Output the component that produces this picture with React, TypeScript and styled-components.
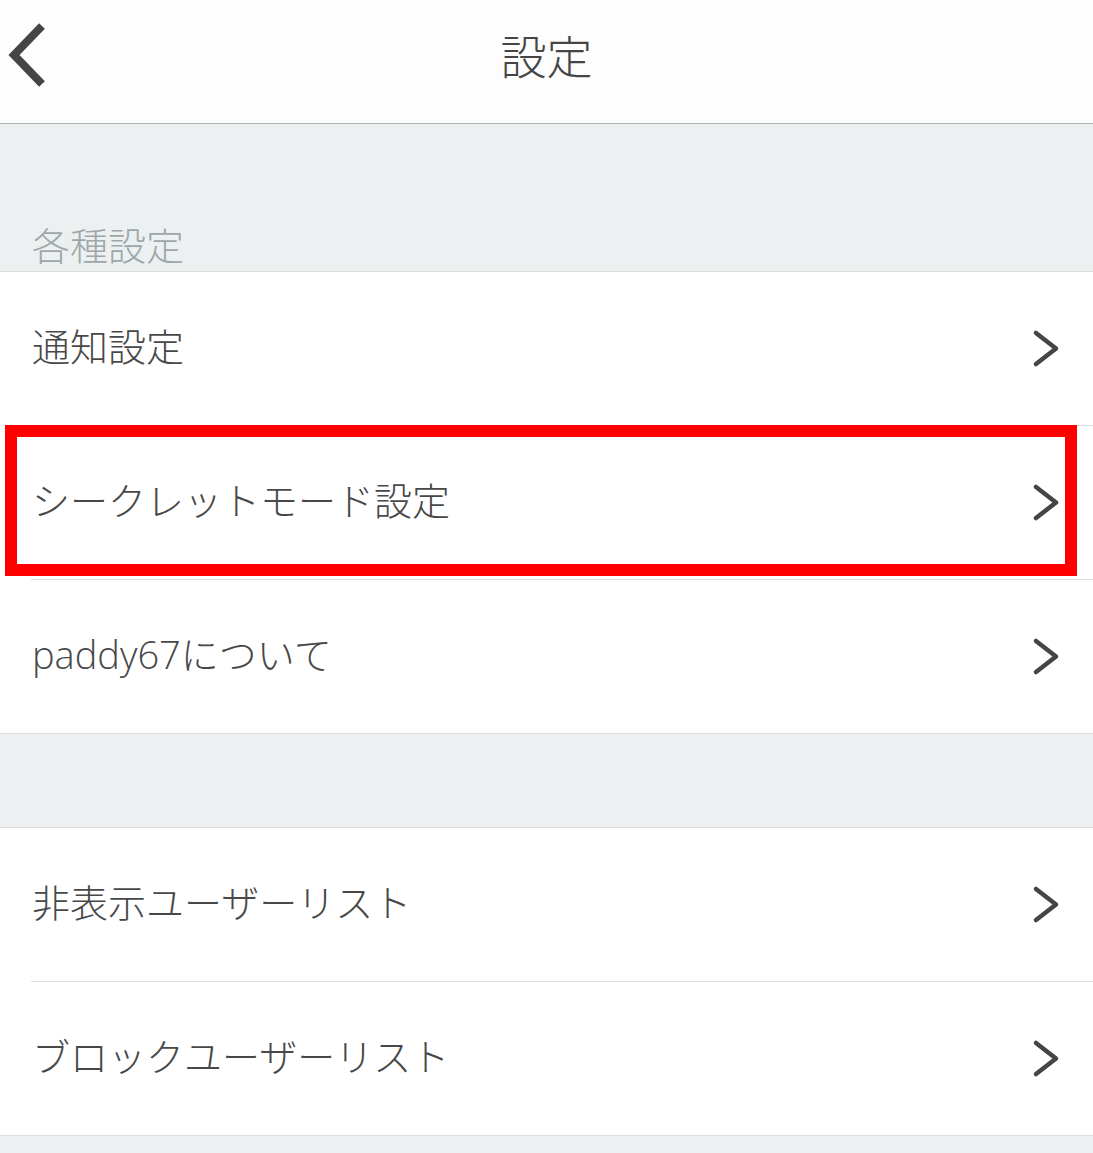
import React from 'react';
import styled, { createGlobalStyle } from 'styled-components';

const GlobalStyle = createGlobalStyle`
  html, body {
    margin: 0;
    padding: 0;
    background: #ecf0f1;
    font-family: "Open Sans", "Noto Sans CJK JP", sans-serif;
  }
`;

interface IRow {
  label: string;
  highlighted?: boolean;
}

const groups: IRow[][] = [
  [
    { label: '通知設定' },
    { label: 'シークレットモード設定', highlighted: true },
    { label: 'paddy67について' },
  ],
  [{ label: '非表示ユーザーリスト' }, { label: 'ブロックユーザーリスト' }],
];

const BackIcon = () => (
  <svg width='44' height='66' viewBox='0 0 44 66'>
    <path
      d='M38 4 L10 33 L38 62'
      fill='none'
      stroke='#454545'
      strokeWidth='8'
      strokeLinejoin='miter'
    />
  </svg>
);

const ChevronIcon = () => (
  <svg width='29' height='39' viewBox='0 0 29 39'>
    <path
      d='M4 4 L24 19.5 L4 35'
      fill='none'
      stroke='#454545'
      strokeWidth='4.5'
      strokeLinecap='round'
      strokeLinejoin='round'
    />
  </svg>
);

const App = (): JSX.Element => {
  return (
    <Page>
      <GlobalStyle />
      <Header>
        <BackButton>
          <BackIcon />
        </BackButton>
        <Title>設定</Title>
      </Header>
      <SectionHead>
        <SectionLabel>各種設定</SectionLabel>
      </SectionHead>
      {groups.map((rows, gi) => (
        <React.Fragment key={gi}>
          {gi > 0 && <Spacer />}
          <Group>
            {rows.map((row, ri) => (
              <Row key={row.label} $last={ri === rows.length - 1}>
                <RowLabel>{row.label}</RowLabel>
                <ChevronIcon />
                {row.highlighted && <Highlight />}
              </Row>
            ))}
          </Group>
        </React.Fragment>
      ))}
    </Page>
  );
};

const Page = styled.div`
  width: 1093px;
  min-height: 1153px;
  background: #ecf0f1;
`;

const Header = styled.header`
  height: 123px;
  background: #fdfdfd;
  border-bottom: 1px solid #b4b4b4;
  display: flex;
  align-items: center;
  justify-content: center;
  position: relative;
`;

const BackButton = styled.div`
  position: absolute;
  left: 4px;
  top: 22px;
  display: flex;
`;

const Title = styled.h1`
  margin: 0;
  font-size: 46px;
  font-weight: 300;
  color: #454545;
  line-height: 1;
  padding-bottom: 12px;
`;

const SectionHead = styled.div`
  height: 147px;
  display: flex;
  align-items: flex-end;
  padding-left: 32px;
  border-bottom: 1px solid #dedede;
`;

const SectionLabel = styled.span`
  font-size: 38px;
  font-weight: 300;
  color: #9ea7a8;
  line-height: 1;
  padding-bottom: 7px;
`;

const Spacer = styled.div`
  height: 93px;
  border-bottom: 1px solid #dedede;
`;

const Group = styled.div`
  background: #ffffff;
  border-bottom: 1px solid #dedede;
`;

const Row = styled.div<{ $last: boolean }>`
  position: relative;
  height: 153px;
  display: flex;
  align-items: center;
  justify-content: space-between;
  padding: 0 32px 0 32px;
  box-sizing: border-box;

  &::after {
    content: '';
    display: ${({ $last }) => ($last ? 'none' : 'block')};
    position: absolute;
    left: 31px;
    right: 0;
    bottom: -1px;
    height: 1px;
    background: #dedede;
  }

  & + & {
    margin-top: 1px;
  }
`;

const RowLabel = styled.span`
  font-size: 38px;
  font-weight: 300;
  color: #484848;
  line-height: 1;
  padding-bottom: 5px;
`;

const Highlight = styled.div`
  position: absolute;
  left: 5px;
  top: -1px;
  width: 1072px;
  height: 151px;
  box-sizing: border-box;
  border: 12px solid #ff0000;
  z-index: 2;
`;

export default App;
